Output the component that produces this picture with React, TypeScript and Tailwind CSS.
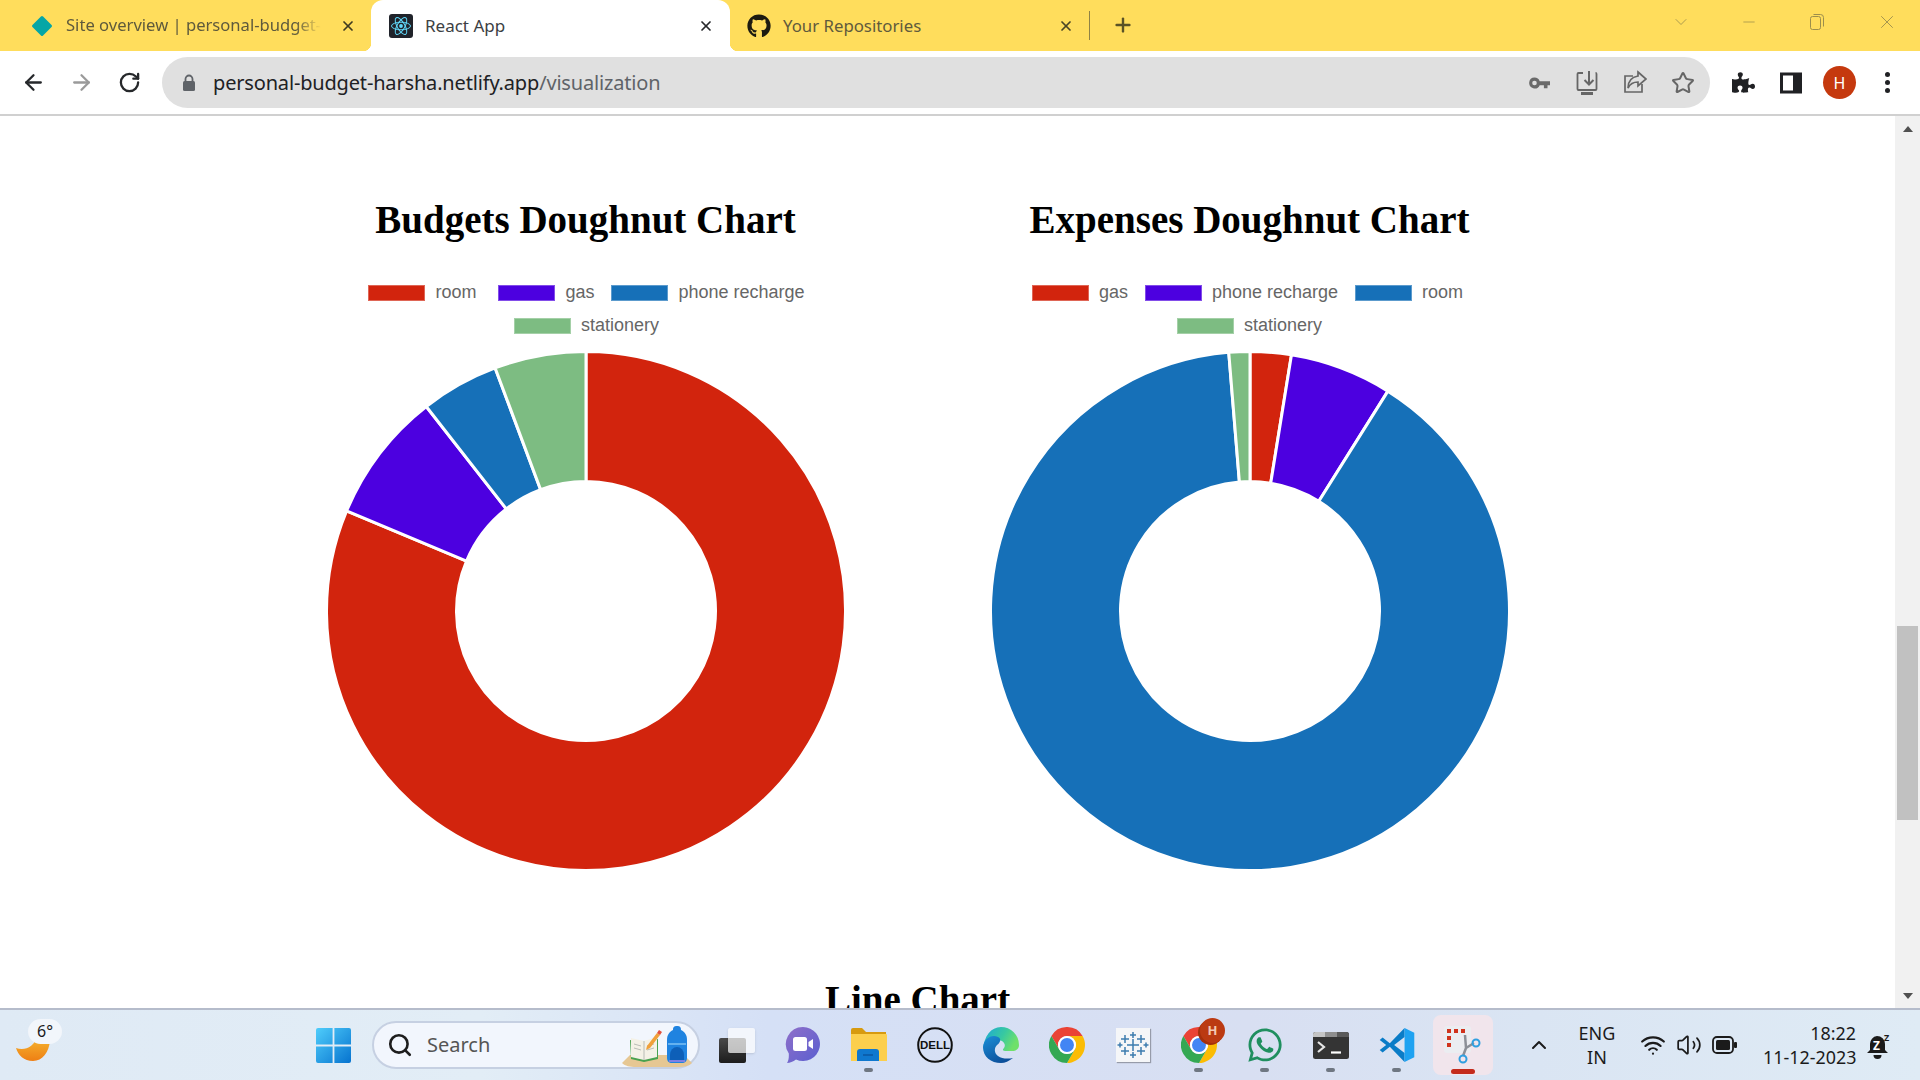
import { ArrowLeft, ArrowRight, RotateCw, Star, Search, ChevronUp, Wifi, Volume2, X, Plus, Minus, ChevronDown } from 'lucide-react';
import { FaGithub, FaPuzzlePiece, FaWhatsapp } from 'react-icons/fa';
import { ReactNode } from 'react';

const RED = '#d2240d';
const PURPLE = '#4c00e0';
const BLUE = '#1670b8';
const GREEN = '#7dbc82';

// angle in degrees, clockwise from 12 o'clock
const point = (r: number, deg: number) => {
  const a = (deg * Math.PI) / 180;
  return `${(260 + r * Math.sin(a)).toFixed(2)} ${(260 - r * Math.cos(a)).toFixed(2)}`;
};

const slicePath = (from: number, to: number) => {
  const large = to - from > 180 ? 1 : 0;
  return `M${point(259.5, from)}A259.5 259.5 0 ${large} 1 ${point(259.5, to)}L${point(129.5, to)}A129.5 129.5 0 ${large} 0 ${point(129.5, from)}Z`;
};

const Doughnut = ({ slices }: { slices: { from: number; to: number; color: string }[] }) => (
  <svg width="520" height="520" viewBox="0 0 520 520" className="mt-[17px] shrink-0">
    {slices.map((s) => (
      <path key={s.from} d={slicePath(s.from, s.to)} fill={s.color} stroke="#fff" strokeWidth="3" />
    ))}
  </svg>
);

const LegendItem = ({ color, label, className }: { color: string; label: string; className?: string }) => (
  <div className={`flex items-center h-[16px] ${className ?? ''}`}>
    <span className="w-[57px] h-[16px] border border-white/30" style={{ backgroundColor: color }} />
    <span className="ml-[10px] mb-[2px] text-[18px] leading-[16px] text-[#666] whitespace-nowrap">{label}</span>
  </div>
);

const ChartTitle = ({ children }: { children: ReactNode }) => (
  <h2 className="h-[48px] text-[39px] leading-[48px] font-bold text-black text-center whitespace-nowrap font-['Liberation_Serif',serif]">
    {children}
  </h2>
);

const Diamond = () => (
  <svg width="24" height="24" viewBox="0 0 24 24">
    <rect x="4.5" y="4.5" width="15" height="15" rx="1.5" transform="rotate(45 12 12)" fill="#05a6a6" />
  </svg>
);

const ReactFavicon = () => (
  <svg width="24" height="24" viewBox="0 0 24 24">
    <rect width="24" height="24" rx="3" fill="#20232a" />
    <g fill="none" stroke="#61dafb" strokeWidth="1">
      <ellipse cx="12" cy="12" rx="9.5" ry="3.8" />
      <ellipse cx="12" cy="12" rx="9.5" ry="3.8" transform="rotate(60 12 12)" />
      <ellipse cx="12" cy="12" rx="9.5" ry="3.8" transform="rotate(120 12 12)" />
    </g>
    <circle cx="12" cy="12" r="1.9" fill="#61dafb" />
  </svg>
);

const TabStrip = () => (
  <div className="flex h-[51px] bg-[#ffdd5c] font-['Noto_Sans',sans-serif] shrink-0">
    {/* inactive tab */}
    <div className="flex items-center w-[371px] pl-[30px]">
      <Diamond />
      <span className="ml-[12px] w-[255px] whitespace-nowrap text-[16.6px] text-[#5f5a3c] [mask-image:linear-gradient(to_right,black_90%,transparent)]">
        Site overview | personal-budget-
      </span>
      <X size={16} strokeWidth={2.6} className="ml-[19px] text-[#3e3a20]" />
    </div>
    {/* active tab */}
    <div className="relative flex items-center w-[359px] pl-[18px] bg-white rounded-t-[12px]">
      <span className="absolute left-[-8px] bottom-0 w-[8px] h-[8px] bg-[radial-gradient(circle_at_0_0,#ffdd5c_8px,#ffffff_8.5px)]" />
      <span className="absolute right-[-8px] bottom-0 w-[8px] h-[8px] bg-[radial-gradient(circle_at_100%_0,#ffdd5c_8px,#ffffff_8.5px)]" />
      <ReactFavicon />
      <span className="ml-[12px] text-[17px] text-[#3c4043]">React App</span>
      <X size={16} strokeWidth={2.6} className="ml-auto mr-[16px] text-[#26282b]" />
    </div>
    {/* inactive tab */}
    <div className="flex items-center w-[359px] pl-[17px]">
      <FaGithub size={24} className="text-[#1d1b10]" />
      <span className="ml-[12px] text-[16.8px] text-[#5f5a3c]">Your Repositories</span>
      <X size={16} strokeWidth={2.6} className="ml-auto mr-[15px] text-[#4a4526]" />
    </div>
    <div className="w-px h-[29px] mt-[11px] bg-[#8f8245]" />
    <Plus size={22} strokeWidth={2.6} className="ml-[22px] mt-[14px] text-[#5a5226]" />
    <div className="ml-auto flex items-start text-[#9c8e4c]">
      <ChevronDown size={20} strokeWidth={1} className="mt-[12px]" />
      <Minus size={18} strokeWidth={1} className="ml-[49px] mt-[13px]" />
      <svg width="16" height="18" viewBox="0 0 16 18" className="ml-[51px] mt-[13px]" fill="none" stroke="currentColor">
        <rect x="1.5" y="3.5" width="10" height="13" rx="2" />
        <path d="M4.5 1.5h7a3 3 0 0 1 3 3v9" />
      </svg>
      <X size={22} strokeWidth={1} className="ml-[51px] mr-[22px] mt-[11px]" />
    </div>
  </div>
);

const KeyIcon = () => (
  <svg width="24" height="24" viewBox="0 0 24 24" fill="#6a6a6a">
    <path d="M7.5 6.5a5.5 5.5 0 0 1 5.2 3.7H23v4h-2.5v3h-3.6v-3h-4.2a5.5 5.5 0 1 1-5.2-7.7Zm0 3.2a2.3 2.3 0 1 0 0 4.6 2.3 2.3 0 0 0 0-4.6Z" />
  </svg>
);

const InstallIcon = () => (
  <svg width="24" height="26" viewBox="0 0 24 26" fill="none" stroke="#666" strokeWidth="1.8">
    <path d="M8 3H3.5a1 1 0 0 0-1 1v15a1 1 0 0 0 1 1h17a1 1 0 0 0 1-1V4a1 1 0 0 0-1-1" />
    <path d="M14 1v13M9.5 10l4.5 4.5 4.5-4.5" strokeWidth="2" />
    <path d="M6 23.5h12" strokeWidth="3" />
  </svg>
);

const ShareIcon = () => (
  <svg width="24" height="26" viewBox="0 0 24 26" fill="none" stroke="#666" strokeWidth="1.7">
    <path d="M10 6H2v16h17v-8" />
    <path d="M15 2l8 7-8 7v-4c-5 0-8 2-10 6 0-7 4-11 10-12Z" />
  </svg>
);

const AddressRow = () => (
  <div className="flex items-center h-[65px] shrink-0 bg-white border-b-2 border-[#d0d0d0] font-['Noto_Sans',sans-serif]">
    <ArrowLeft size={25} strokeWidth={2.2} className="ml-[21px] text-[#26282b]" />
    <ArrowRight size={25} strokeWidth={2.2} className="ml-[23px] text-[#9a9a9a]" />
    <RotateCw size={23} strokeWidth={2.4} className="ml-[24px] text-[#26282b]" />
    <div className="flex items-center ml-[21px] w-[1548px] h-[51px] rounded-full bg-[#e0e0e0]">
      <svg width="14" height="18" viewBox="0 0 14 18" className="ml-[20px]">
        <path d="M3.5 7V5a3.5 3.5 0 0 1 7 0v2" fill="none" stroke="#5f6368" strokeWidth="1.8" />
        <rect x="1" y="7" width="12" height="10" rx="1.5" fill="#5f6368" />
      </svg>
      <span className="ml-[17px] text-[20px] tracking-[-0.17px] text-[#202124] whitespace-nowrap">
        personal-budget-harsha.netlify.app<span className="text-[#5f6368]">/visualization</span>
      </span>
      <div className="ml-auto flex items-center gap-[24px] mr-[15px]">
        <KeyIcon />
        <InstallIcon />
        <ShareIcon />
        <Star size={24} strokeWidth={2} className="text-[#666]" />
      </div>
    </div>
    <FaPuzzlePiece size={23} className="ml-[22px] text-[#202124]" />
    <svg width="22" height="22" viewBox="0 0 22 22" className="ml-[25px]">
      <rect x="1.5" y="2" width="19" height="18" fill="none" stroke="#202124" strokeWidth="3" />
      <rect x="13" y="2" width="7" height="18" fill="#202124" />
    </svg>
    <div className="ml-[21px] w-[33px] h-[33px] rounded-full bg-[#c5390e] text-white text-[16px] flex items-center justify-center">H</div>
    <div className="ml-[29px] flex flex-col gap-[3px]">
      <span className="w-[5px] h-[5px] rounded-full bg-[#202124]" />
      <span className="w-[5px] h-[5px] rounded-full bg-[#202124]" />
      <span className="w-[5px] h-[5px] rounded-full bg-[#202124]" />
    </div>
  </div>
);

const Page = () => (
  <div className="flex flex-1 min-h-0 bg-white font-['Liberation_Sans',sans-serif]">
    <div className="flex-1 min-w-0 overflow-hidden pl-[253.5px] pt-[80px]">
      <div className="flex w-[1328px]">
        <section className="w-[664px] flex flex-col items-center">
          <ChartTitle>Budgets Doughnut Chart</ChartTitle>
          <div className="mt-[41px] flex ml-[2px]">
            <LegendItem color={RED} label="room" />
            <LegendItem color={PURPLE} label="gas" className="ml-[22px]" />
            <LegendItem color={BLUE} label="phone recharge" className="ml-[17px]" />
          </div>
          <div className="mt-[17px] flex ml-[2px]">
            <LegendItem color={GREEN} label="stationery" />
          </div>
          <Doughnut
            slices={[
              { from: 0, to: 292.7, color: RED },
              { from: 292.7, to: 322, color: PURPLE },
              { from: 322, to: 339.5, color: BLUE },
              { from: 339.5, to: 360, color: GREEN },
            ]}
          />
        </section>
        <section className="w-[664px] flex flex-col items-center">
          <ChartTitle>Expenses Doughnut Chart</ChartTitle>
          <div className="mt-[41px] flex mr-[4px]">
            <LegendItem color={RED} label="gas" />
            <LegendItem color={PURPLE} label="phone recharge" className="ml-[17px]" />
            <LegendItem color={BLUE} label="room" className="ml-[17px]" />
          </div>
          <div className="mt-[17px] flex">
            <LegendItem color={GREEN} label="stationery" />
          </div>
          <Doughnut
            slices={[
              { from: 0, to: 9.2, color: RED },
              { from: 9.2, to: 32.1, color: PURPLE },
              { from: 32.1, to: 355.3, color: BLUE },
              { from: 355.3, to: 360, color: GREEN },
            ]}
          />
        </section>
      </div>
      <div className="w-[1328px] mt-[105px]">
        <ChartTitle>Line Chart</ChartTitle>
      </div>
    </div>
    {/* scrollbar */}
    <div className="w-[25px] shrink-0 flex flex-col bg-[#f1f1f1]">
      <div className="h-[25px] flex items-center justify-center">
        <span className="w-0 h-0 border-x-[5.5px] border-x-transparent border-b-[6px] border-b-[#505050]" />
      </div>
      <div className="mt-[485px] mx-[2px] h-[194px] bg-[#c1c1c1]" />
      <div className="mt-auto h-[25px] flex items-center justify-center">
        <span className="w-0 h-0 border-x-[5.5px] border-x-transparent border-t-[6px] border-t-[#505050]" />
      </div>
    </div>
  </div>
);

const WindowsLogo = () => (
  <svg width="35" height="35" viewBox="0 0 35 35">
    <defs>
      <linearGradient id="win" x1="0" y1="0" x2="1" y2="1">
        <stop offset="0" stopColor="#4fcdfb" />
        <stop offset="1" stopColor="#0673cf" />
      </linearGradient>
    </defs>
    <path d="M0 2a2 2 0 0 1 2-2h14.6v16.6H0ZM18.4 0H33a2 2 0 0 1 2 2v14.6H18.4ZM0 18.4h16.6V35H2a2 2 0 0 1-2-2ZM18.4 18.4H35V33a2 2 0 0 1-2 2H18.4Z" fill="url(#win)" />
  </svg>
);

const SearchArt = () => (
  <svg width="70" height="52" viewBox="0 0 70 52">
    <path d="M8 36h54l8 8c-3 3-8 4-14 4H14C8 48 3 47 0 44Z" fill="#e6c793" />
    <path d="M8 21l14 3 14-4v20l-14 3-13-3Z" fill="#49a24e" />
    <path d="M9 19l13 3 13-4v20l-13 3-13-3Z" fill="#f4f1e6" />
    <path d="M22 22v19M12 25l7 2M12 29l7 2M25 27l7-2M25 31l7-2" stroke="#a9b0a9" strokeWidth="0.8" />
    <path d="M25 27l10-13 3 2-10 13-4 2Z" fill="#f0a03a" />
    <path d="M35 14l2-3 3 2-2 3Z" fill="#e2503c" />
    <path d="M45 21c0-5 2-8 6-10 0-3 1-4 4-4s4 1 4 4c4 2 6 5 6 10v18c0 3-2 5-5 5H50c-3 0-5-2-5-5Z" fill="#1f83e0" />
    <path d="M48 36a7 8 0 0 1 14 0v5H48Z" fill="#0d5fb8" />
    <path d="M46 25h18" stroke="#7cc1f5" strokeWidth="1.5" />
    <path d="M47 42h16" stroke="#9f7fe6" strokeWidth="1.5" />
  </svg>
);

const TaskView = () => (
  <div className="relative w-[36px] h-[35px]">
    <div className="absolute left-0 bottom-0 w-[27px] h-[25px] rounded-[2px] bg-[linear-gradient(#4a4a4a,#1c1c1c)]" />
    <div className="absolute right-0 top-0 w-[27px] h-[25px] rounded-[2px] bg-white/70 shadow-sm" />
  </div>
);

const MeetIcon = () => (
  <svg width="36" height="38" viewBox="0 0 36 38">
    <defs>
      <linearGradient id="meet" x1="0" y1="0" x2="1" y2="1">
        <stop offset="0" stopColor="#8f6fc9" />
        <stop offset="1" stopColor="#5a5fd0" />
      </linearGradient>
    </defs>
    <path d="M18 1a17 17 0 1 1-7 32.5c-3 2-6 3.5-9 3.5 1.5-2 2-5 1.8-9.5A17 17 0 0 1 18 1Z" fill="url(#meet)" />
    <rect x="8" y="11" width="14" height="14" rx="2.5" fill="#fff" />
    <path d="M23.5 16l4.5-3v10l-4.5-3Z" fill="#fff" />
  </svg>
);

const FolderIcon = () => (
  <svg width="36" height="34" viewBox="0 0 36 34">
    <path d="M0 2a2 2 0 0 1 2-2h9l4 4h20v8H0Z" fill="#d79a0f" />
    <path d="M0 6h35a1 1 0 0 1 1 1v26H0Z" fill="#fccf4d" />
    <path d="M6 33V24a3 3 0 0 1 3-3h16a3 3 0 0 1 3 3v9Z" fill="#0f78cf" />
    <path d="M12 27h10" stroke="#0a4f96" strokeWidth="1.2" />
  </svg>
);

const DellIcon = () => (
  <svg width="36" height="36" viewBox="0 0 36 36">
    <circle cx="18" cy="18" r="16.8" fill="none" stroke="#111" strokeWidth="2" />
    <text x="18" y="22.2" textAnchor="middle" fontSize="11.5" fontWeight="700" fontFamily="Liberation Sans, sans-serif" fill="#111">DELL</text>
  </svg>
);

const EdgeIcon = () => (
  <svg width="36" height="36" viewBox="0 0 36 36">
    <defs>
      <linearGradient id="edge1" x1="0" y1="0" x2="1" y2="0.4">
        <stop offset="0" stopColor="#1aa5dc" />
        <stop offset="0.6" stopColor="#38c9a0" />
        <stop offset="1" stopColor="#6fe06a" />
      </linearGradient>
      <linearGradient id="edge2" x1="0" y1="0" x2="0.6" y2="1">
        <stop offset="0" stopColor="#1b8fd8" />
        <stop offset="1" stopColor="#0c4f9a" />
      </linearGradient>
    </defs>
    <path d="M18 0a18 18 0 0 1 18 18c0 4-3 6-7 6h-7c-2 0-3-1-1-3 1.500-2 1-5-2-7-6-3-16 1-19 9C1 9 8 0 18 0Z" fill="url(#edge1)" />
    <path d="M0 20c1-9 9-13 15-10 4 2 2 6-1 8-3 3-3 8 1 11 4 3 10 3 15 2-4 3-8 5-12 5C8 36 0 30 0 20Z" fill="url(#edge2)" />
  </svg>
);

const ChromeIcon = () => (
  <svg width="36" height="36" viewBox="0 0 48 48">
    <path d="M24 12H44.78A24 24 0 0 0 3.2 12L13.6 30A12 12 0 0 1 24 12Z" fill="#ea4335" />
    <path d="M34.4 30L24 48A24 24 0 0 0 44.78 12H24A12 12 0 0 1 34.4 30Z" fill="#fbbc04" />
    <path d="M13.6 30L3.2 12A24 24 0 0 0 24 48L34.4 30A12 12 0 0 1 13.6 30Z" fill="#34a853" />
    <circle cx="24" cy="24" r="12" fill="#fff" />
    <circle cx="24" cy="24" r="9.300" fill="#4285f4" />
  </svg>
);

const TableauIcon = () => {
  const crosses: [number, number, number][] = [
    [17, 17, 6], [17, 7, 3], [17, 27, 3], [9, 11, 4], [25, 11, 4], [9, 23, 4], [25, 23, 4], [4, 17, 2.5], [30, 17, 2.5],
  ];
  return (
    <div className="w-[34px] h-[34px] bg-[#f5f6f8] shadow-[1px_1px_1px_rgba(0,0,0,0.3)]">
      <svg width="34" height="34" viewBox="0 0 34 34" stroke="#3d7cae" strokeWidth="1.500">
        {crosses.map(([x, y, r]) => (
          <path key={`${x}-${y}`} d={`M${x - r} ${y}H${x + r}M${x} ${y - r}V${y + r}`} />
        ))}
      </svg>
    </div>
  );
};

const ChromeProfile = () => (
  <div className="relative">
    <ChromeIcon />
    <div className="absolute left-[19px] top-[-9px] w-[25px] h-[25px] rounded-full bg-[#bb3a12] shadow-[-2px_2px_0_#a5300c] text-[#f3c9b4] text-[13px] font-bold flex items-center justify-center">H</div>
  </div>
);

const TerminalIcon = () => (
  <svg width="36" height="27" viewBox="0 0 36 27">
    <rect width="36" height="27" rx="2.500" fill="#343434" />
    <path d="M2.5 0H12v5H0V2.500A2.500 2.500 0 0 1 2.500 0Z" fill="#c4c4c4" />
    <rect x="12" width="12" height="5" fill="#8e8e8e" />
    <path d="M24 0h9.500A2.500 2.500 0 0 1 36 2.500V5H24Z" fill="#5a5a5a" />
    <path d="M5 10l6 5-6 5" fill="none" stroke="#e6e6e6" strokeWidth="2.200" />
    <path d="M18 20.500h10" stroke="#fff" strokeWidth="2.200" />
  </svg>
);

const VsCodeIcon = () => (
  <svg width="36" height="36" viewBox="0 0 100 100">
    <path d="M2 36l8-7 20 16L71 3v25L42 50l29 22v25L30 55 10 71l-8-7 18-14Z" fill="#0a7cc7" />
    <path d="M71 3l27 13v68L71 97Z" fill="#1fa2f1" />
  </svg>
);

const SnipIcon = () => (
  <svg width="38" height="38" viewBox="0 0 38 38">
    <rect x="0" y="0" width="27" height="27" rx="3" fill="#ebedf1" />
    <path d="M3 3h4v4H3ZM10 3h4v4h-4ZM17 3h4v4h-4ZM3 10h4v4H3ZM3 17h4v4H3Z" fill="#d0321c" />
    <path d="M21 9l1 13-3 8M30 17l-8 5" fill="none" stroke="#8b8f96" strokeWidth="2.500" />
    <circle cx="32" cy="17" r="3.500" fill="none" stroke="#2f9fe0" strokeWidth="2" />
    <circle cx="19" cy="33" r="3.500" fill="none" stroke="#2f9fe0" strokeWidth="2" />
  </svg>
);

const TaskButton = ({ children, dot }: { children: ReactNode; dot?: boolean }) => (
  <div className="relative w-[66px] h-full flex items-center justify-center">
    {children}
    {dot && <span className="absolute left-[28px] bottom-[8px] w-[9px] h-[4px] rounded-full bg-[#6f7782]" />}
  </div>
);

const Taskbar = () => (
  <div className="flex h-[72px] shrink-0 border-t-2 border-[#b5bccb] bg-[linear-gradient(90deg,#dfeaf5_0%,#e2edf6_25%,#d5e0f6_40%,#d8dff2_65%,#dae5f3_80%,#dfebf5_100%)] font-['Noto_Sans',sans-serif] text-[#1b1b1b]">
    {/* weather */}
    <div className="relative w-[300px] h-full">
      <svg width="34" height="26" viewBox="0 0 34 26" className="absolute left-[16px] top-[25px]">
        <defs>
          <linearGradient id="moon" x1="0" y1="0" x2="0" y2="1">
            <stop offset="0" stopColor="#f6bb33" />
            <stop offset="1" stopColor="#ee7f14" />
          </linearGradient>
        </defs>
        <path d="M34 0c1 14-6 26-17 26C8 26 2 20 0 13c8 3 18 0 22-13Z" fill="url(#moon)" />
      </svg>
      <div className="absolute left-[28px] top-[9px] w-[34px] h-[25px] rounded-full bg-[#f2f6fb] text-[16px] leading-[25px] text-center">6°</div>
    </div>
    <div className="w-[66px] h-full flex items-center justify-center">
      <WindowsLogo />
    </div>
    {/* search */}
    <div className="ml-[6px] my-[11px] w-[328px] flex items-center rounded-full border-2 border-[#c6d0e2] bg-[#f2f6fd]">
      <Search size={26} strokeWidth={2.4} className="ml-[13px] text-[#1d1d1d]" />
      <span className="ml-[14px] text-[20px] text-[#555]">Search</span>
      <div className="ml-auto mr-[6px]">
        <SearchArt />
      </div>
    </div>
    <div className="ml-[4px] flex h-full">
      <TaskButton><TaskView /></TaskButton>
      <TaskButton><MeetIcon /></TaskButton>
      <TaskButton dot><FolderIcon /></TaskButton>
      <TaskButton><DellIcon /></TaskButton>
      <TaskButton><EdgeIcon /></TaskButton>
      <TaskButton><ChromeIcon /></TaskButton>
      <TaskButton><TableauIcon /></TaskButton>
      <TaskButton dot><ChromeProfile /></TaskButton>
      <TaskButton dot><FaWhatsapp size={38} className="text-[#1f8f5f]" /></TaskButton>
      <TaskButton dot><TerminalIcon /></TaskButton>
      <TaskButton dot><VsCodeIcon /></TaskButton>
      <TaskButton>
        <div className="relative w-[60px] h-[60px] rounded-[8px] bg-[#f1e5ec] flex items-center justify-center">
          <SnipIcon />
          <span className="absolute left-[18px] bottom-[1px] w-[24px] h-[5px] rounded-full bg-[#c42b1c]" />
        </div>
      </TaskButton>
    </div>
    {/* tray */}
    <div className="flex items-center h-full">
      <ChevronUp size={24} strokeWidth={2} className="ml-[31px]" />
      <div className="ml-[14px] w-[64px] text-center text-[18px] leading-[24px]">
        <div>ENG</div>
        <div>IN</div>
      </div>
      <Wifi size={26} strokeWidth={2} className="ml-[11px]" />
      <Volume2 size={26} strokeWidth={1.6} className="ml-[10px]" />
      <svg width="26" height="18" viewBox="0 0 26 18" className="ml-[10px]">
        <rect x="1" y="1" width="20" height="16" rx="4" fill="none" stroke="#1b1b1b" strokeWidth="1.800" />
        <rect x="4" y="4" width="14" height="10" rx="1.500" fill="#1b1b1b" />
        <rect x="22" y="6" width="3" height="6" rx="1" fill="#1b1b1b" />
      </svg>
      <div className="ml-[25px] w-[93px] text-right text-[17.9px] leading-[24px] whitespace-nowrap">
        <div>18:22</div>
        <div>11-12-2023</div>
      </div>
      <svg width="26" height="28" viewBox="0 0 26 28" className="ml-[11px]">
        <path d="M10 5a8 8 0 0 1 8 8v6l3 3H0l3-3v-6a8 8 0 0 1 7-8Z" fill="#1b1b1b" />
        <path d="M6.500 24h8a4 4 0 0 1-8 0Z" fill="#1b1b1b" />
        <text x="6" y="18.500" fontSize="12" fontWeight="700" fill="#fff" fontFamily="Noto Sans, sans-serif">Z</text>
        <text x="17" y="10" fontSize="9" fontWeight="700" fill="#1b1b1b" fontFamily="Noto Sans, sans-serif">Z</text>
      </svg>
    </div>
  </div>
);

export default function App() {
  return (
    <div className="w-[1920px] h-[1080px] flex flex-col overflow-hidden">
      <TabStrip />
      <AddressRow />
      <Page />
      <Taskbar />
    </div>
  );
}
